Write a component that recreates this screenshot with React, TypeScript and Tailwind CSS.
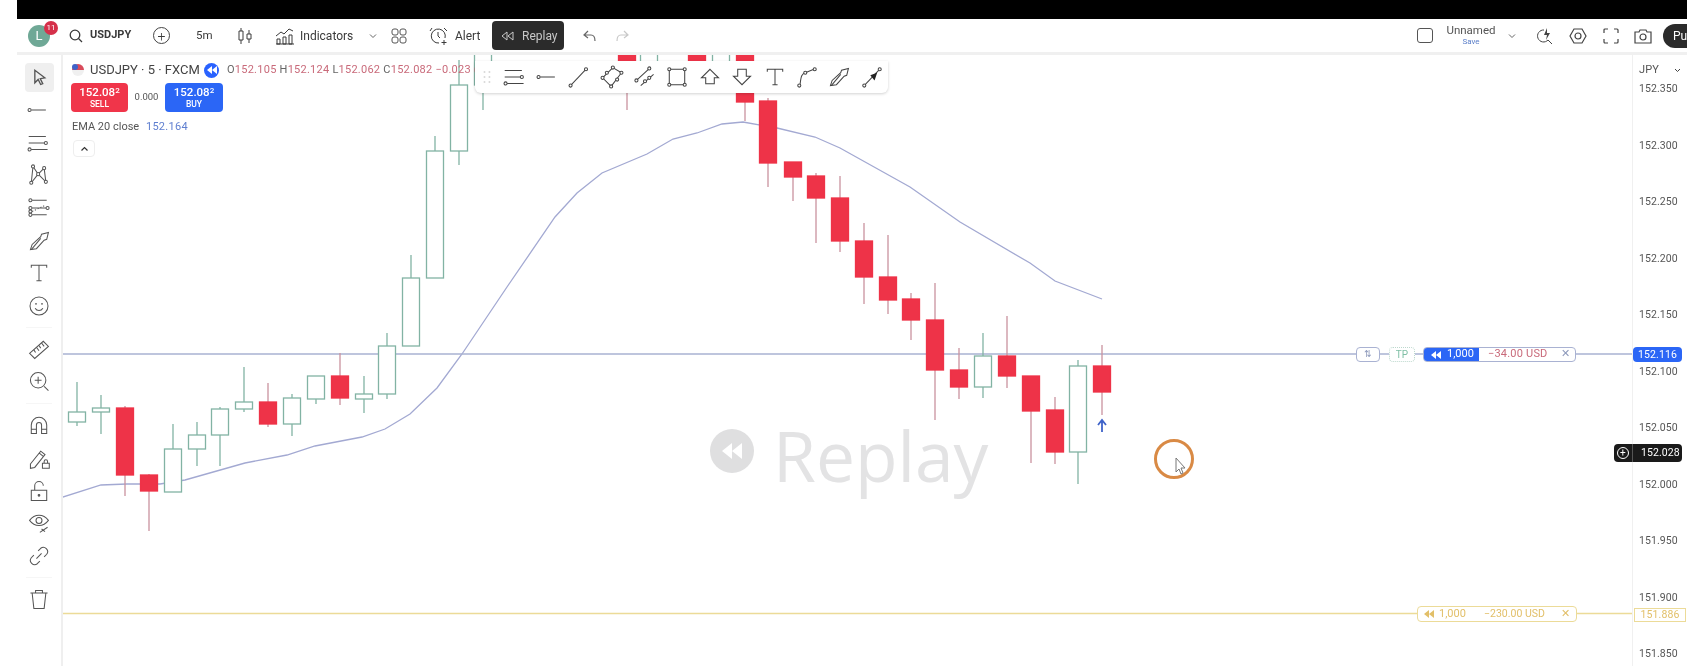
import type { ReactNode } from 'react';

type Candle = [x: number, up: boolean, top: number, open: number, close: number, bottom: number];

// full page coords: x, green?, wick top, body top, body bottom, wick bottom
const candles: Candle[] = [
  [77, true, 382, 412, 422, 426],
  [101, true, 395, 408, 412, 434],
  [125, false, 406, 408, 475, 496],
  [149, false, 474, 475, 491, 531],
  [173, true, 424, 449, 492, 492],
  [197, true, 422, 435, 449, 466],
  [220, true, 407, 409, 435, 466],
  [244, true, 367, 402, 409, 412],
  [268, false, 383, 402, 424, 427],
  [292, true, 394, 398, 424, 436],
  [316, true, 376, 376, 399, 404],
  [340, false, 353, 376, 398, 405],
  [364, true, 376, 394, 399, 413],
  [387, true, 333, 346, 394, 399],
  [411, true, 255, 278, 346, 346],
  [435, true, 136, 151, 278, 278],
  [459, true, 60, 85, 151, 165],
  [483, true, 40, 40, 85, 110],
  [627, false, 40, 40, 85, 110],
  [649, true, 40, 40, 85, 85],
  [697, false, 40, 40, 85, 85],
  [721, true, 40, 40, 85, 85],
  [745, false, 40, 40, 102, 121],
  [768, false, 98, 101, 163, 187],
  [793, false, 162, 162, 177, 201],
  [816, false, 173, 176, 198, 243],
  [840, false, 176, 198, 241, 252],
  [864, false, 223, 241, 277, 304],
  [888, false, 235, 277, 300, 314],
  [911, false, 293, 299, 320, 340],
  [935, false, 283, 320, 370, 420],
  [959, false, 348, 370, 387, 399],
  [983, true, 333, 356, 387, 398],
  [1007, false, 316, 356, 376, 388],
  [1031, false, 376, 376, 411, 463],
  [1055, false, 397, 410, 452, 464],
  [1078, true, 360, 366, 452, 484],
  [1102, false, 345, 366, 392, 415],
];

const ema =
  '60,498 101,485 127,484 160,484 185,480 245,463 287,455 315,446 362,437 385,429 410,414 437,388 462,354 507,287 555,217 577,193 602,173 647,154 673,139 697,133 722,124 743,122 777,128 815,137 840,148 910,187 960,222 1030,263 1055,281 1102,299';

const prices = ['152.350', '152.300', '152.250', '152.200', '152.150', '152.100', '152.050', '152.000', '151.950', '151.900', '151.850'];

function Ic({ size = 24, box = 28, className = '', children }: { size?: number; box?: number; className?: string; children: ReactNode }) {
  return (
    <svg width={size} height={size} viewBox={`0 0 ${box} ${box}`} fill="none" stroke="currentColor" strokeWidth="1.2" className={className}>
      {children}
    </svg>
  );
}

const Dot = ({ x, y }: { x: number; y: number }) => <circle cx={x} cy={y} r="1.8" fill="#fff" />;

const LinesIcon = () => (
  <Ic>
    <path d="M2 6.500h20M2 14h18M4 21.500h20" />
    <Dot x={22} y={14} />
    <Dot x={3} y={21.5} />
  </Ic>
);
const DashIcon = () => (
  <Ic>
    <path d="M5 14h17" />
    <Dot x={3} y={14} />
  </Ic>
);
const TrendIcon = () => (
  <Ic>
    <path d="M4 23L20 6" />
    <Dot x={3} y={24} />
    <Dot x={21} y={5} />
  </Ic>
);
const PolyIcon = () => (
  <Ic>
    <path d="M15 3L25 9 13 25 3 15z" />
    <Dot x={15} y={3} />
    <Dot x={25} y={9} />
    <Dot x={13} y={25} />
    <Dot x={3} y={15} />
    <Dot x={20} y={17} />
    <Dot x={8} y={9} />
  </Ic>
);
const ParallelIcon = () => (
  <Ic>
    <path d="M5 17L18 5M9 24L24 11" />
    <Dot x={4} y={18} />
    <Dot x={19} y={4} />
    <Dot x={14} y={19} />
    <Dot x={19} y={15} />
  </Ic>
);
const RectIcon = () => (
  <Ic>
    <path d="M5 5h18v18H5z" />
    <Dot x={5} y={5} />
    <Dot x={23} y={5} />
    <Dot x={5} y={23} />
    <Dot x={23} y={23} />
  </Ic>
);
const ArrowUp = () => (
  <Ic>
    <path d="M14 5L24 15h-5v7H9v-7H4z" />
  </Ic>
);
const ArrowDown = () => (
  <Ic>
    <path d="M9 5h10v8h5L14 23 4 13h5z" />
  </Ic>
);
const TextIcon = () => (
  <Ic>
    <path d="M5 8V5h18v3M14 5v18M11 23h6" />
  </Ic>
);
const CurveIcon = () => (
  <Ic>
    <path d="M6 22C7 13 8 10 12 9l10-4" />
    <Dot x={5} y={24} />
    <Dot x={12} y={9} />
    <Dot x={23} y={5} />
  </Ic>
);
const BrushIcon = () => (
  <Ic>
    <path d="M4 24l2-6L16 9l1-3 8-2-2 8-3 1-9 10z" />
    <path d="M5 24l11-13" />
  </Ic>
);
const PointerIcon = () => (
  <Ic>
    <path d="M6 23L22 6" />
    <Dot x={5} y={24} />
    <Dot x={23} y={5} />
    <path d="M12 12l8-3-3 9z" fill="#222" stroke="none" />
  </Ic>
);
const CursorIcon = () => (
  <Ic size={20} box={24}>
    <path d="M7 4l12 9-5.500 1 3 6-2.500 1-3-6L7 19z" strokeWidth="1.6" />
  </Ic>
);
const NetworkIcon = () => (
  <Ic>
    <path d="M7 4L5 23l8-10 9 9L20 6l-7 7-6-9" />
    <Dot x={7} y={4} />
    <Dot x={5} y={23} />
    <Dot x={22} y={22} />
    <Dot x={20} y={6} />
    <Dot x={13} y={13} />
  </Ic>
);
const FibIcon = () => (
  <Ic>
    <path d="M6 5h17M6 14h17M6 22h17" />
    <path d="M6 18l15-7" strokeDasharray="1.500 2" />
    <Dot x={4} y={5} />
    <Dot x={4} y={14} />
    <Dot x={24} y={14} />
    <Dot x={4} y={18} />
    <Dot x={4} y={22} />
  </Ic>
);
const SmileIcon = () => (
  <Ic>
    <circle cx="14" cy="14" r="10.500" />
    <path d="M9.500 16.500c2 3.500 7 3.500 9 0" />
    <circle cx="10.500" cy="11.500" r="1" fill="currentColor" stroke="none" />
    <circle cx="17.500" cy="11.500" r="1" fill="currentColor" stroke="none" />
  </Ic>
);
const RulerIcon = () => (
  <Ic>
    <path d="M3 19L19 5l6 6L9 25z" />
    <path d="M8 15l2 3M11 12l3 4M14 10l2 3M17 7l3 4" />
  </Ic>
);
const ZoomIcon = () => (
  <Ic>
    <circle cx="13" cy="12" r="9" />
    <path d="M9 12h8M13 8v8M20 19l5 5" />
  </Ic>
);
const MagnetIcon = () => (
  <Ic>
    <path d="M5 24v-10a9 9 0 0 1 18 0v10h-6V14a3 3 0 0 0-6 0v10zM5 19h6M17 19h6" />
  </Ic>
);
const PencilLockIcon = () => (
  <Ic>
    <path d="M4 21L16 6l5 4L9 25l-5 1zM14 8l5 4" />
    <path d="M18 20h8v6h-8zM20 20v-2a2 2 0 0 1 4 0v2" />
  </Ic>
);
const LockIcon = () => (
  <Ic>
    <path d="M5 13h18v12H5zM9 13V8a5 5 0 0 1 10 0" />
    <circle cx="14" cy="19" r="1" fill="currentColor" />
  </Ic>
);
const EyeIcon = () => (
  <Ic>
    <path d="M3 11c6-8 16-8 22 0-6 8-16 8-22 0z" />
    <circle cx="14" cy="11" r="3.500" />
    <path d="M15 25l9-6M17 21l4 3" />
  </Ic>
);
const LinkIcon = () => (
  <Ic>
    <path d="M11 17l6-6M13 8l3-3a5 5 0 0 1 7 7l-3 3M15 20l-3 3a5 5 0 0 1-7-7l3-3" />
  </Ic>
);
const TrashIcon = () => (
  <Ic>
    <path d="M4 7h20M10 7V4h8v3M6 7l2 18h12l2-18" />
  </Ic>
);

function SideItem({ active, children }: { active?: boolean; children: ReactNode }) {
  return (
    <div className="h-[32.700px] flex items-center justify-center">
      <div className={`w-[29px] h-[29px] rounded flex items-center justify-center text-[#555] ${active ? 'bg-[#efefef]' : ''}`}>{children}</div>
    </div>
  );
}

function Sep() {
  return <div className="h-[10.500px] flex items-center"><div className="w-[26px] h-px bg-[#f6f6f6]" /></div>;
}

function Rewind({ className = '' }: { className?: string }) {
  return (
    <svg width="10" height="8" viewBox="0 0 10 8" fill="currentColor" className={className}>
      <path d="M5 0v8L0 4zM10 0v8L5 4z" />
    </svg>
  );
}

function Buy({ price, label, cls }: { price: string; label: string; cls: string }) {
  return (
    <div className={`h-[29px] rounded flex flex-col items-center justify-center text-white leading-none font-medium ${cls}`}>
      <span className="text-[11.500px]">{price}<span className="text-[8px] align-top">2</span></span>
      <span className="text-[8.500px] mt-[2px]">{label}</span>
    </div>
  );
}

export default function App() {
  return (
    <div className="w-[1687px] h-[666px] overflow-hidden bg-white flex font-[Roboto,sans-serif] text-[#3a3a3a] blur-[0.5px]">
      <div className="w-[17px] shrink-0" />
      <div className="flex-1 min-w-0 flex flex-col">
        <div className="h-[19px] bg-black shrink-0" />

        {/* top toolbar */}
        <div className="h-[36px] shrink-0 flex items-center border-b-[3px] border-[#f0f0f0] text-[12px]">
          <div className="relative ml-[11px] w-[22px] h-[22px] rounded-full bg-[#6fa896] text-white flex items-center justify-center text-[13px]">
            L
            <span className="absolute -top-[4px] left-[16px] w-[14px] h-[14px] rounded-full bg-[#d5304a] text-[8px] flex items-center justify-center">11</span>
          </div>
          <svg width="14" height="14" viewBox="0 0 14 14" fill="none" stroke="currentColor" strokeWidth="1.300" className="ml-[19px]">
            <circle cx="6" cy="6" r="4.800" />
            <path d="M9.500 9.500L13 13" />
          </svg>
          <span className="ml-[7px] w-[41px] font-bold text-[11px]">USDJPY</span>
          <div className="ml-[22px] w-[17px] h-[17px] rounded-full border border-[#444] flex items-center justify-center text-[14px] leading-none font-light">+</div>
          <span className="ml-[26px] w-[16px] text-[11.500px]">5m</span>
          <svg width="16" height="18" viewBox="0 0 16 18" fill="none" stroke="currentColor" className="ml-[25px]">
            <path d="M4 1v3M2 4h4v9H2zM4 13v4M12 3v4M10 7h4v5h-4zM12 12v4" />
          </svg>
          <svg width="20" height="18" viewBox="0 0 20 18" fill="none" stroke="currentColor" className="ml-[22px]">
            <path d="M1 9l5-4 3 2 5-5 4 2M2 17v-5h3v5zM8 17v-7h3v7zM14 17v-9h3v9zM1 17h18" />
          </svg>
          <span className="ml-[5px] w-[54px] text-[12px]">Indicators</span>
          <svg width="10" height="6" viewBox="0 0 10 6" fill="none" stroke="#666" className="ml-[14px]"><path d="M2 1.500l3 3 3-3" /></svg>
          <svg width="16" height="16" viewBox="0 0 16 16" fill="none" stroke="#555" className="ml-[13px]">
            <rect x="1" y="1" width="6" height="6" rx="2" />
            <rect x="9" y="1" width="6" height="6" rx="2" />
            <rect x="1" y="9" width="6" height="6" rx="2" />
            <rect x="9" y="9" width="6" height="6" rx="2" />
          </svg>
          <svg width="20" height="20" viewBox="0 0 20 20" fill="none" stroke="currentColor" className="ml-[22px]">
            <path d="M16 12A7 7 0 1 0 10 17M9 6v4l2 2M3 2L1 5M15 2l3 3M15 14v5M12.500 16.500h5" />
          </svg>
          <span className="ml-[6px] w-[27px] text-[12px]">Alert</span>
          <div className="ml-[10px] w-[72px] h-[29px] rounded bg-[#2b2b2b] text-[#c9c9c9] flex items-center text-[12px]">
            <svg width="13" height="10" viewBox="0 0 13 10" fill="none" stroke="currentColor" className="ml-[9px]"><path d="M6 1L1 5l5 4zM12 1L7 5l5 4z" /></svg>
            <span className="ml-[8px]">Replay</span>
          </div>
          <svg width="14" height="12" viewBox="0 0 14 12" fill="none" stroke="#666" strokeWidth="1.200" className="ml-[19px]"><path d="M5 1L1 5l4 3M1 5h7c3 0 4 2 4 6" /></svg>
          <svg width="14" height="12" viewBox="0 0 14 12" fill="none" stroke="#c8c8c8" strokeWidth="1.200" className="ml-[18px]"><path d="M9 1l4 4-4 3M13 5H6c-3 0-4 2-4 6" /></svg>

          <div className="flex-1" />
          <div className="w-[16px] h-[15px] rounded-[3px] border-[1.500px] border-[#555]" />
          <div className="ml-[13px] w-[50px] flex flex-col items-center leading-none">
            <span className="text-[11.500px] text-[#555]">Unnamed</span>
            <span className="text-[8px] text-[#5b7fc9] mt-[1px]">Save</span>
          </div>
          <svg width="10" height="6" viewBox="0 0 10 6" fill="none" stroke="#666" className="ml-[11px]"><path d="M2 1.500l3 3 3-3" /></svg>
          <svg width="18" height="18" viewBox="0 0 18 18" fill="none" stroke="#444" className="ml-[19px]">
            <path d="M8 3a6 6 0 1 0 4 10M12 13l4 4" />
            <path d="M11 1L8 8h3l-1 5 4-7h-3z" fill="#444" stroke="none" />
          </svg>
          <svg width="18" height="18" viewBox="0 0 18 18" fill="none" stroke="#444" strokeWidth="1.200" className="ml-[15px]">
            <path d="M5 2h8l4 7-4 7H5L1 9z" />
            <circle cx="9" cy="9" r="3" />
          </svg>
          <svg width="16" height="16" viewBox="0 0 16 16" fill="none" stroke="#444" strokeWidth="1.200" className="ml-[16px]">
            <path d="M1 5V2a1 1 0 0 1 1-1h3M11 1h3a1 1 0 0 1 1 1v3M15 11v3a1 1 0 0 1-1 1h-3M5 15H2a1 1 0 0 1-1-1v-3" />
          </svg>
          <svg width="18" height="16" viewBox="0 0 18 16" fill="none" stroke="#444" strokeWidth="1.200" className="ml-[15px]">
            <path d="M1 4h4l1-2h6l1 2h4v11H1z" />
            <circle cx="9" cy="9" r="3" />
          </svg>
          <div className="ml-[11px] w-[24px] h-[24px] rounded-l-full bg-[#2b2b2b] text-white text-[12px] pl-[10px] leading-[24px] overflow-hidden">Pu</div>
        </div>

        <div className="flex-1 min-h-0 flex">
          {/* left drawing tools */}
          <div className="w-[44px] shrink-0 flex flex-col items-center pt-[6px]">
            <SideItem active><CursorIcon /></SideItem>
            <SideItem><DashIcon /></SideItem>
            <SideItem><LinesIcon /></SideItem>
            <SideItem><NetworkIcon /></SideItem>
            <SideItem><FibIcon /></SideItem>
            <SideItem><BrushIcon /></SideItem>
            <SideItem><TextIcon /></SideItem>
            <SideItem><SmileIcon /></SideItem>
            <Sep />
            <SideItem><RulerIcon /></SideItem>
            <SideItem><ZoomIcon /></SideItem>
            <Sep />
            <SideItem><MagnetIcon /></SideItem>
            <SideItem><PencilLockIcon /></SideItem>
            <SideItem><LockIcon /></SideItem>
            <SideItem><EyeIcon /></SideItem>
            <SideItem><LinkIcon /></SideItem>
            <Sep />
            <SideItem><TrashIcon /></SideItem>
          </div>
          <div className="w-[2px] shrink-0 bg-[#efefef]" />

          {/* chart */}
          <div className="relative flex-1 min-w-0">
            <svg width="1569" height="611" viewBox="63 55 1569 611" className="block">
              <polyline points={ema} fill="none" stroke="#a3a9d2" strokeWidth="1.300" />
              <line x1="63" x2="1632" y1="354" y2="354" stroke="#a9b2d2" strokeWidth="1.300" />
              <line x1="63" x2="1632" y1="613.500" y2="613.500" stroke="#ecdb98" strokeWidth="1.300" />
              {candles.map(([x, up, top, open, close, bottom]) => (
                <g key={x}>
                  <line x1={x} x2={x} y1={top} y2={bottom} stroke={up ? '#82b3a4' : '#c9929e'} strokeWidth="1.300" />
                  <rect x={x - 8.5} y={open} width="17" height={close - open} fill={up ? '#fff' : '#ee3348'} stroke={up ? '#82b3a4' : '#ee3348'} strokeWidth="1.300" />
                </g>
              ))}
              <path d="M1102 432v-11M1098 425l4-5 4 5" fill="none" stroke="#3f63c9" strokeWidth="1.800" />
            </svg>

            {/* legend */}
            <div className="absolute left-[9px] top-[7px] text-[13px] leading-[16px] flex items-center whitespace-nowrap">
              <span className="relative w-[12px] h-[12px] rounded-full bg-[linear-gradient(#d94b5b_50%,#f0f0f0_50%)] mr-[6px]">
                <span className="absolute left-0 top-0 w-[6px] h-[6px] rounded-full bg-[#3f63c9]" />
              </span>
              <span className="w-[108px] text-[#444]">USDJPY · 5 · FXCM</span>
              <span className="ml-[6px] w-[15px] h-[15px] rounded-full bg-[#2962ff] text-white flex items-center justify-center"><Rewind /></span>
              <span className="ml-[8px] text-[11px] text-[#666] tracking-[0.25px]">
                O<span className="text-[#c96a7a]">152.105</span> H<span className="text-[#c96a7a]">152.124</span> L<span className="text-[#c96a7a]">152.062</span> C<span className="text-[#c96a7a]">152.082</span> <span className="text-[#c96a7a]">−0.023 (</span>
              </span>
            </div>
            <div className="absolute left-[8px] top-[28px] flex items-center">
              <Buy price="152.08" label="SELL" cls="w-[57px] bg-[#f0354a]" />
              <span className="w-[37px] text-center text-[9.500px] text-[#555]">0.000</span>
              <Buy price="152.08" label="BUY" cls="w-[58px] bg-[#2b66f6]" />
            </div>
            <div className="absolute left-[9px] top-[64px] text-[11px] text-[#555] whitespace-nowrap">
              EMA 20 close <span className="ml-[4px] text-[#5f7fd0] tracking-[0.3px]">152.164</span>
            </div>
            <div className="absolute left-[10px] top-[85px] w-[22px] h-[17px] rounded-sm border border-[#eee] flex items-center justify-center">
              <svg width="9" height="6" viewBox="0 0 9 6" fill="none" stroke="#333" strokeWidth="1.200"><path d="M1.500 4.500l3-3 3 3" /></svg>
            </div>

            {/* floating drawing toolbar */}
            <div className="absolute left-[412px] top-[6px] w-[413px] h-[32px] rounded-b-md bg-white shadow-[0_1px_3px_rgba(0,0,0,0.18)] flex items-center pl-[8px] text-[#444]">
              <svg width="8" height="12" viewBox="0 0 8 12" fill="#d8d8d8" className="mr-[8px]">
                {[1, 6, 11].map((y) => (
                  <g key={y}><circle cx="1.500" cy={y} r="1" /><circle cx="6.500" cy={y} r="1" /></g>
                ))}
              </svg>
              {[LinesIcon, DashIcon, TrendIcon, PolyIcon, ParallelIcon, RectIcon, ArrowUp, ArrowDown, TextIcon, CurveIcon, BrushIcon, PointerIcon].map((Icon, i) => (
                <div key={i} className="w-[32.700px] flex justify-center"><Icon /></div>
              ))}
            </div>

            {/* watermark */}
            <div className="absolute left-[647px] top-[351px] flex items-center pointer-events-none">
              <div className="w-[44px] h-[44px] rounded-full bg-[#dfdfe0] flex items-center justify-center text-white">
                <svg width="22" height="18" viewBox="0 0 22 18" fill="currentColor"><path d="M11 1v16L1 9zM21 1v16L11 9z" /></svg>
              </div>
              <span className="ml-[19px] mt-[9px] text-[69.500px] leading-[80px] text-[#e3e3e4] font-['Open_Sans',sans-serif]">Replay</span>
            </div>

            {/* open position line */}
            <div className="absolute left-[1293px] top-[292px] w-[24px] h-[15px] rounded border border-[#a9b2d2] bg-white flex items-center justify-center text-[9px] text-[#8d99bb]">⇅</div>
            <div className="absolute left-[1326px] top-[292px] w-[26px] h-[15px] rounded border border-dotted border-[#bcd8cd] bg-white flex items-center justify-center text-[10px] text-[#7fbfa5]">TP</div>
            <div className="absolute left-[1360px] top-[292px] w-[153px] h-[15px] rounded border border-[#a9b2d2] bg-white flex items-center text-[11px] overflow-hidden">
              <div className="w-[55px] h-full bg-[#2b66f6] text-white flex items-center pl-[7px] gap-[6px]"><Rewind />1,000</div>
              <span className="ml-[9px] w-[72px] text-[#c96a7a] tracking-[0.2px]">−34.00 USD</span>
              <span className="ml-[1px] text-[#8d99bb]">✕</span>
            </div>

            {/* stop line */}
            <div className="absolute left-[1354px] top-[551px] w-[160px] h-[16px] rounded border border-[#ecdb98] bg-white flex items-center text-[11px] text-[#e2bf68]">
              <Rewind className="ml-[6px]" />
              <span className="ml-[5px] w-[45px]">1,000</span>
              <span className="w-[72px] text-[10.500px]">−230.00 USD</span>
              <span className="ml-[5px]">✕</span>
            </div>

            {/* cursor highlight */}
            <div className="absolute left-[1091px] top-[384px] w-[40px] h-[40px] rounded-full border-[3px] border-[#d98a45]" />
            <svg width="14" height="20" viewBox="0 0 14 20" fill="#fff" stroke="#777" className="absolute left-[1111px] top-[402px]">
              <path d="M2 1v14l3-3 2 5 2-1-2-5h4z" />
            </svg>
          </div>

          {/* price axis */}
          <div className="relative w-[55px] shrink-0 border-l border-[#f0f0f0] text-[10.500px] text-[#555] tracking-[0.1px]">
            <div className="mt-[4px] h-[22px] px-[6px] flex items-center justify-between text-[11px]">
              JPY
              <svg width="7" height="5" viewBox="0 0 7 5" fill="none" stroke="#444"><path d="M1 1l2.500 2.500L6 1" /></svg>
            </div>
            <div className="flex flex-col gap-[40.500px] pl-[6px]">
              {prices.map((p) => (
                <div key={p} className="h-[16px] leading-[16px]">{p}</div>
              ))}
            </div>
            <div className="absolute left-0 top-[292px] w-[49px] h-[15px] rounded-sm bg-[#2b66f6] text-white flex items-center justify-center">152.116</div>
            <div className="absolute -left-[19px] top-[389px] w-[68px] h-[18px] rounded-sm bg-[#1a1a1a] text-white flex items-center">
              <span className="w-[19px] flex justify-center border-r border-[#555] h-full items-center">
                <span className="w-[12px] h-[12px] rounded-full border border-white flex items-center justify-center text-[10px] leading-none">+</span>
              </span>
              <span className="ml-[8px]">152.028</span>
            </div>
            <div className="absolute left-[1px] top-[553px] w-[52px] h-[14px] bg-white border border-[#ecdb98] text-[#e2bf68] flex items-center justify-center">151.886</div>
          </div>
        </div>
      </div>
    </div>
  );
}
